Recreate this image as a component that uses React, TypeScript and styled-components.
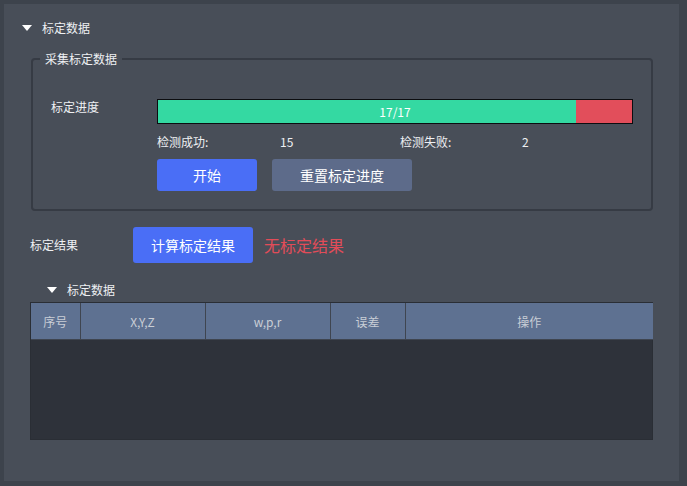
import React from "react";
import styled, { createGlobalStyle } from "styled-components";

const GlobalStyle = createGlobalStyle`
  html, body {
    margin: 0;
    padding: 0;
    background: #3d434c;
  }
  body {
    font-family: "Noto Sans CJK SC", "Noto Sans", sans-serif;
    font-size: 12px;
    color: #e8eaee;
  }
`;

const Screen = styled.div`
  width: 687px;
  height: 486px;
  box-sizing: border-box;
  padding: 4px 8px 5px 4px;
`;

const Panel = styled.div`
  height: 100%;
  background: #484e58;
  padding: 14px 26px 0 0;
  box-sizing: border-box;
`;

const Collapse = styled.div<{ $indent: number }>`
  display: flex;
  align-items: center;
  gap: 10px;
  height: 20px;
  padding-left: ${({ $indent }) => $indent}px;
  font-size: 12px;
  line-height: 16px;
  color: #eef0f3;
`;

const Caret = styled.span`
  width: 0;
  height: 0;
  border-left: 5px solid transparent;
  border-right: 5px solid transparent;
  border-top: 6px solid #ffffff;
`;

const Group = styled.fieldset`
  margin: 13px 0 0 27px;
  padding: 0 18px 18px 18px;
  border: 2px solid #363b44;
  border-radius: 4px;
  min-width: 0;
`;

const Legend = styled.legend`
  margin-left: -11px;
  padding: 0 5px;
  font-size: 12px;
  line-height: 16px;
  color: #eef0f3;
`;

const ProgressRow = styled.div`
  display: flex;
  align-items: flex-start;
  margin-top: 32px;
`;

const Label = styled.div<{ $width: number }>`
  width: ${({ $width }) => $width}px;
  flex: none;
  font-size: 12px;
  line-height: 16px;
  color: #eef0f3;
`;

const Bar = styled.div`
  position: relative;
  flex: 1;
  display: flex;
  height: 23px;
  border: 1px solid #0c0d10;
  background: #e24e5b;
`;

const BarFill = styled.div`
  height: 100%;
  background: #34d9a2;
`;

const BarText = styled.span`
  position: absolute;
  inset: 0;
  display: flex;
  align-items: center;
  justify-content: center;
  font-size: 12px;
  color: #ffffff;
`;

const Stats = styled.div`
  display: grid;
  grid-template-columns: 123px 120px 122px auto;
  margin: 10px 0 0 106px;
  font-size: 12px;
  line-height: 16px;
  color: #eef0f3;
`;

const Actions = styled.div`
  display: flex;
  gap: 15px;
  margin: 9px 0 0 106px;
`;

const Button = styled.button<{ $variant: "primary" | "muted"; $width: number; $height: number }>`
  width: ${({ $width }) => $width}px;
  height: ${({ $height }) => $height}px;
  border: none;
  border-radius: 3px;
  padding: 0;
  font-family: inherit;
  font-size: 14px;
  color: #ffffff;
  background: ${({ $variant }) => ($variant === "primary" ? "#4a6ef6" : "#5d6b8a")};
  cursor: pointer;
`;

const ResultRow = styled.div`
  display: flex;
  align-items: center;
  margin: 16px 0 0 26px;
`;

const NoResult = styled.span`
  margin-left: 11px;
  font-size: 16px;
  line-height: 20px;
  color: #e24c58;
`;

const TableSection = styled.div`
  margin-top: 17px;
`;

const TableBox = styled.div`
  margin: 2px 0 0 26px;
  height: 138px;
  box-sizing: border-box;
  border: 1px solid #2a2e35;
  background: #2e323a;
`;

const Table = styled.table`
  width: 100%;
  border-collapse: collapse;
  table-layout: fixed;
`;

const Th = styled.th`
  height: 36px;
  padding: 0;
  background: #5e7191;
  border-right: 1px solid #3f4550;
  border-bottom: 1px solid #3f4550;
  font-size: 12px;
  font-weight: normal;
  color: #c9ced6;
  &:last-child {
    border-right: none;
  }
`;

const columns: { title: string; width: number }[] = [
  { title: "序号", width: 49 },
  { title: "X,Y,Z", width: 125 },
  { title: "w,p,r", width: 125 },
  { title: "误差", width: 75 },
  { title: "操作", width: 248 },
];

const success = 15;
const failed = 2;
const total = success + failed;

export default function App() {
  return (
    <>
      <GlobalStyle />
      <Screen>
        <Panel>
          <Collapse $indent={18}>
            <Caret />
            标定数据
          </Collapse>

          <Group>
            <Legend>采集标定数据</Legend>
            <ProgressRow>
              <Label $width={106}>标定进度</Label>
              <Bar>
                <BarFill style={{ width: `${(success / total) * 100}%` }} />
                <BarText>
                  {total}/{total}
                </BarText>
              </Bar>
            </ProgressRow>
            <Stats>
              <span>检测成功:</span>
              <span>{success}</span>
              <span>检测失败:</span>
              <span>{failed}</span>
            </Stats>
            <Actions>
              <Button $variant="primary" $width={100} $height={32}>
                开始
              </Button>
              <Button $variant="muted" $width={140} $height={32}>
                重置标定进度
              </Button>
            </Actions>
          </Group>

          <ResultRow>
            <Label $width={103}>标定结果</Label>
            <Button $variant="primary" $width={120} $height={36}>
              计算标定结果
            </Button>
            <NoResult>无标定结果</NoResult>
          </ResultRow>

          <TableSection>
            <Collapse $indent={43}>
              <Caret />
              标定数据
            </Collapse>
            <TableBox>
              <Table>
                <colgroup>
                  {columns.map((c) => (
                    <col key={c.title} style={{ width: c.width }} />
                  ))}
                </colgroup>
                <thead>
                  <tr>
                    {columns.map((c) => (
                      <Th key={c.title}>{c.title}</Th>
                    ))}
                  </tr>
                </thead>
              </Table>
            </TableBox>
          </TableSection>
        </Panel>
      </Screen>
    </>
  );
}
